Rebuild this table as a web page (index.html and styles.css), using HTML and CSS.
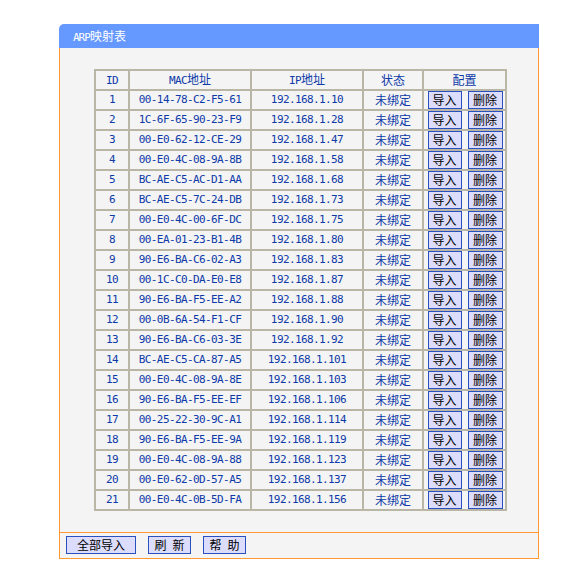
FILE: index.html
```html
<!DOCTYPE html>
<html>
<head>
<meta charset="utf-8">
<link rel="stylesheet" href="styles.css">
</head>
<body>
<div class="panel">
  <div class="title"><span class="m">ARP</span>映射表</div>
  <div class="content">
    <table class="arp">
      <colgroup><col class="c-id"><col class="c-mac"><col class="c-ip"><col class="c-st"><col class="c-cfg"></colgroup>
      <thead>
        <tr><th><span class="m">ID</span></th><th><span class="m">MAC</span>地址</th><th><span class="m">IP</span>地址</th><th>状态</th><th>配置</th></tr>
      </thead>
      <tbody>
        <tr><td class="m">1</td><td class="m">00-14-78-C2-F5-61</td><td class="m">192.168.1.10</td><td>未绑定</td><td><div class="ops"><button class="btn">导入</button><button class="btn">删除</button></div></td></tr>
        <tr><td class="m">2</td><td class="m">1C-6F-65-90-23-F9</td><td class="m">192.168.1.28</td><td>未绑定</td><td><div class="ops"><button class="btn">导入</button><button class="btn">删除</button></div></td></tr>
        <tr><td class="m">3</td><td class="m">00-E0-62-12-CE-29</td><td class="m">192.168.1.47</td><td>未绑定</td><td><div class="ops"><button class="btn">导入</button><button class="btn">删除</button></div></td></tr>
        <tr><td class="m">4</td><td class="m">00-E0-4C-08-9A-8B</td><td class="m">192.168.1.58</td><td>未绑定</td><td><div class="ops"><button class="btn">导入</button><button class="btn">删除</button></div></td></tr>
        <tr><td class="m">5</td><td class="m">BC-AE-C5-AC-D1-AA</td><td class="m">192.168.1.68</td><td>未绑定</td><td><div class="ops"><button class="btn">导入</button><button class="btn">删除</button></div></td></tr>
        <tr><td class="m">6</td><td class="m">BC-AE-C5-7C-24-DB</td><td class="m">192.168.1.73</td><td>未绑定</td><td><div class="ops"><button class="btn">导入</button><button class="btn">删除</button></div></td></tr>
        <tr><td class="m">7</td><td class="m">00-E0-4C-00-6F-DC</td><td class="m">192.168.1.75</td><td>未绑定</td><td><div class="ops"><button class="btn">导入</button><button class="btn">删除</button></div></td></tr>
        <tr><td class="m">8</td><td class="m">00-EA-01-23-B1-4B</td><td class="m">192.168.1.80</td><td>未绑定</td><td><div class="ops"><button class="btn">导入</button><button class="btn">删除</button></div></td></tr>
        <tr><td class="m">9</td><td class="m">90-E6-BA-C6-02-A3</td><td class="m">192.168.1.83</td><td>未绑定</td><td><div class="ops"><button class="btn">导入</button><button class="btn">删除</button></div></td></tr>
        <tr><td class="m">10</td><td class="m">00-1C-C0-DA-E0-E8</td><td class="m">192.168.1.87</td><td>未绑定</td><td><div class="ops"><button class="btn">导入</button><button class="btn">删除</button></div></td></tr>
        <tr><td class="m">11</td><td class="m">90-E6-BA-F5-EE-A2</td><td class="m">192.168.1.88</td><td>未绑定</td><td><div class="ops"><button class="btn">导入</button><button class="btn">删除</button></div></td></tr>
        <tr><td class="m">12</td><td class="m">00-0B-6A-54-F1-CF</td><td class="m">192.168.1.90</td><td>未绑定</td><td><div class="ops"><button class="btn">导入</button><button class="btn">删除</button></div></td></tr>
        <tr><td class="m">13</td><td class="m">90-E6-BA-C6-03-3E</td><td class="m">192.168.1.92</td><td>未绑定</td><td><div class="ops"><button class="btn">导入</button><button class="btn">删除</button></div></td></tr>
        <tr><td class="m">14</td><td class="m">BC-AE-C5-CA-87-A5</td><td class="m">192.168.1.101</td><td>未绑定</td><td><div class="ops"><button class="btn">导入</button><button class="btn">删除</button></div></td></tr>
        <tr><td class="m">15</td><td class="m">00-E0-4C-08-9A-8E</td><td class="m">192.168.1.103</td><td>未绑定</td><td><div class="ops"><button class="btn">导入</button><button class="btn">删除</button></div></td></tr>
        <tr><td class="m">16</td><td class="m">90-E6-BA-F5-EE-EF</td><td class="m">192.168.1.106</td><td>未绑定</td><td><div class="ops"><button class="btn">导入</button><button class="btn">删除</button></div></td></tr>
        <tr><td class="m">17</td><td class="m">00-25-22-30-9C-A1</td><td class="m">192.168.1.114</td><td>未绑定</td><td><div class="ops"><button class="btn">导入</button><button class="btn">删除</button></div></td></tr>
        <tr><td class="m">18</td><td class="m">90-E6-BA-F5-EE-9A</td><td class="m">192.168.1.119</td><td>未绑定</td><td><div class="ops"><button class="btn">导入</button><button class="btn">删除</button></div></td></tr>
        <tr><td class="m">19</td><td class="m">00-E0-4C-08-9A-88</td><td class="m">192.168.1.123</td><td>未绑定</td><td><div class="ops"><button class="btn">导入</button><button class="btn">删除</button></div></td></tr>
        <tr><td class="m">20</td><td class="m">00-E0-62-0D-57-A5</td><td class="m">192.168.1.137</td><td>未绑定</td><td><div class="ops"><button class="btn">导入</button><button class="btn">删除</button></div></td></tr>
        <tr><td class="m">21</td><td class="m">00-E0-4C-0B-5D-FA</td><td class="m">192.168.1.156</td><td>未绑定</td><td><div class="ops"><button class="btn">导入</button><button class="btn">删除</button></div></td></tr>
      </tbody>
    </table>
  </div>
  <div class="footer">
    <button class="btn btn-wide">全部导入</button>
    <button class="btn btn-mid">刷&ensp;新</button>
    <button class="btn btn-mid">帮&ensp;助</button>
  </div>
</div>
</body>
</html>
```
FILE: styles.css
```css
html, body {
  margin: 0;
  padding: 0;
  background: #ffffff;
}
body {
  font-family: "Noto Sans CJK SC", sans-serif;
  font-size: 12px;
}
.panel {
  margin: 24px 0 0 59px;
  width: 480px;
}
.title {
  height: 24px;
  line-height: 24px;
  background: #6699ff;
  color: #ffffff;
  padding-left: 14px;
  border-top-left-radius: 5px;
  font-size: 12px;
}
.title .m {
  letter-spacing: -1px;
}
.content {
  background: #f4f4f4;
  border-left: 1px solid #ff9933;
  border-right: 1px solid #ff9933;
  padding: 21px 0 21px 34px;
}
.arp {
  border-collapse: collapse;
  table-layout: fixed;
  width: 411px;
}
.c-id { width: 34px; }
.c-mac { width: 122px; }
.c-ip { width: 112px; }
.c-st { width: 60px; }
.c-cfg { width: 83px; }
.arp th, .arp td {
  border: 2px solid #b9b6a6;
  height: 18px;
  padding: 0;
  text-align: center;
  color: #0d3aa8;
  font-weight: normal;
  font-size: 12px;
  line-height: 16px;
  white-space: nowrap;
}
.arp .m, .m {
  font-family: "DejaVu Sans Mono", monospace;
  font-size: 11px;
  letter-spacing: -0.6px;
}
.ops {
  display: flex;
  justify-content: center;
  gap: 6px;
  padding-left: 1px;
}
.btn {
  font-family: "Noto Sans CJK SC", sans-serif;
  font-size: 12px;
  color: #000000;
  background: #dcdcfc;
  border: 1px solid #2a50c0;
  height: 18px;
  line-height: 14px;
  padding: 0;
  margin: 0;
  width: 34px;
}
.ops .btn + .btn {
  width: 35px;
}
.footer {
  background: #f4f4f4;
  border: 1px solid #ff9933;
  padding: 3px 0 0 6px;
  box-sizing: border-box;
  height: 27px;
  display: flex;
  gap: 12px;
  align-items: flex-start;
}
.btn-wide { width: 70px; }
.btn-mid { width: 43px; }
```
